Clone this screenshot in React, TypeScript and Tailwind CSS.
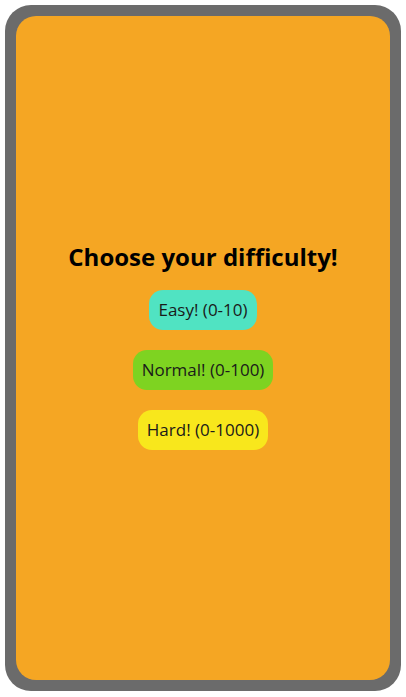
export default function App() {
  const levels = [
    { label: "Easy! (0-10)", color: "bg-[#50e3c2]" },
    { label: "Normal! (0-100)", color: "bg-[#7ed321]" },
    { label: "Hard! (0-1000)", color: "bg-[#f8e71c]" },
  ];
  return (
    <div className="h-[697px] w-[406px] bg-white p-[5px] font-['Open_Sans',sans-serif]">
      <div className="h-[686px] w-[396px] rounded-[26px] bg-[#6b6b6b] p-[11px]">
        <div className="flex h-full flex-col items-center justify-center rounded-[20px] bg-[#f5a623] pb-[5px]">
          <h1 className="mb-[17px] text-[24px] font-bold leading-[32px] text-black">Choose your difficulty!</h1>
          <div className="flex flex-col items-center gap-[20px]">
            {levels.map((l) => (
              <button key={l.label} className={`h-[40px] rounded-[14px] px-[9px] text-[17px] text-[#1a1a1a] ${l.color}`}>
                {l.label}
              </button>
            ))}
          </div>
        </div>
      </div>
    </div>
  );
}
